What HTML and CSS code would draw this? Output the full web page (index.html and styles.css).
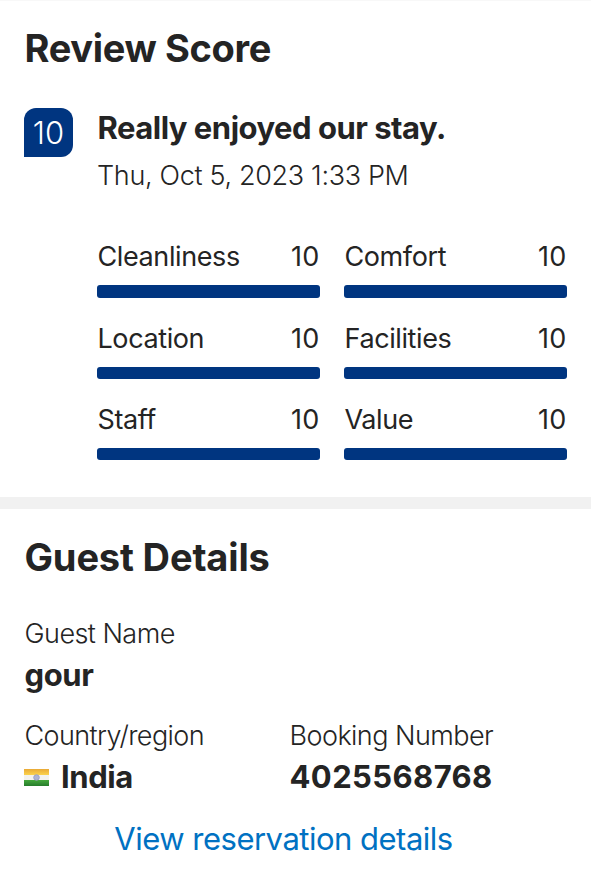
FILE: index.html
```html
<!DOCTYPE html>
<html lang="en">
  <head>
    <meta charset="UTF-8" />
    <meta name="viewport" content="width=device-width, initial-scale=1.0" />
    <title>Review Score</title>
    <link rel="stylesheet" href="styles.css">
  </head>
  <body>
    <section class="review">
      <h1>Review Score</h1>
      <div class="review-body">
        <div class="score-badge"><span>10</span></div>
        <div class="review-content">
          <h2 class="review-title">Really enjoyed our stay.</h2>
          <p class="review-date">Thu, Oct 5, 2023 1:33 PM</p>
          <div class="scores">
            <div class="score">
              <div class="score-text"><span>Cleanliness</span><span class="number">10</span></div>
              <div class="bar"></div>
            </div>
            <div class="score">
              <div class="score-text"><span>Comfort</span><span class="number">10</span></div>
              <div class="bar"></div>
            </div>
            <div class="score">
              <div class="score-text"><span>Location</span><span class="number">10</span></div>
              <div class="bar"></div>
            </div>
            <div class="score">
              <div class="score-text"><span>Facilities</span><span class="number">10</span></div>
              <div class="bar"></div>
            </div>
            <div class="score">
              <div class="score-text"><span>Staff</span><span class="number">10</span></div>
              <div class="bar"></div>
            </div>
            <div class="score">
              <div class="score-text"><span>Value</span><span class="number">10</span></div>
              <div class="bar"></div>
            </div>
          </div>
        </div>
      </div>
    </section>
    <section class="guest">
      <h1 class="guest-title">Guest Details</h1>
      <div class="guest-name">
        <p class="label">Guest Name</p>
        <p class="info">gour</p>
      </div>
      <div class="detail-row">
        <div>
          <p class="label country-label">Country/region</p>
          <p class="info country">
            <svg class="flag" viewBox="0 0 25 17">
              <defs>
                <linearGradient id="saffron" x2="0" y2="1">
                  <stop stop-color="#e9a936" />
                  <stop offset="1" stop-color="#fbd34d" />
                </linearGradient>
                <linearGradient id="green" x2="0" y2="1">
                  <stop stop-color="#45a83c" />
                  <stop offset="1" stop-color="#267c2c" />
                </linearGradient>
              </defs>
              <path fill="url(#saffron)" d="M0 0h25v6H0z" />
              <path fill="#f3f2ee" d="M0 6h25v5H0z" />
              <path fill="url(#green)" d="M0 11h25v6H0z" />
              <circle cx="12.500" cy="8.500" r="2.800" fill="#aeb4d4" stroke="#929ac4" stroke-width=".8" />
            </svg>
            <span>India</span>
          </p>
        </div>
        <div>
          <p class="label booking-label">Booking Number</p>
          <p class="info booking-number">4025568768</p>
        </div>
      </div>
      <a class="reservation-link" href="#">View reservation details</a>
    </section>
  </body>
</html>
```
FILE: styles.css
```css
* {
  margin: 0;
  padding: 0;
  box-sizing: border-box;
}
body {
  background: #fff;
  color: #242424;
  font-family: Inter, "Liberation Sans", sans-serif;
  font-size: 27px;
  line-height: 32px;
}
h1 {
  font-size: 38px;
  line-height: 48px;
  font-weight: 700;
  letter-spacing: -0.35px;
  padding-left: 0.5px;
}
.guest-title {
  letter-spacing: -0.15px;
}
.review {
  height: 509px;
  padding: 23px 24px 0;
  border-top: 1px solid #f8f8f8;
  border-bottom: 12px solid #f1f1f1;
}
.review-body {
  display: flex;
  gap: 24px;
  margin-top: 36.4px;
}
.score-badge {
  display: flex;
  align-items: center;
  justify-content: center;
  width: 49px;
  height: 49px;
  background: #003580;
  border-radius: 12px 12px 12px 0;
  color: #fff;
  font-size: 31px;
  font-weight: 300;
}
.review-content {
  flex: 1;
}
.review-title {
  font-size: 31px;
  line-height: 40px;
  font-weight: 700;
  letter-spacing: -0.5px;
  padding-left: 0.5px;
}
.review-date {
  margin-top: 11.6px;
  font-weight: 300;
  letter-spacing: -0.33px;
}
.scores {
  display: grid;
  grid-template-columns: 1fr 1fr;
  row-gap: 24.3px;
  column-gap: 24px;
  margin-top: 49.3px;
}
.score {
  height: 57px;
}
.score-text {
  display: flex;
  justify-content: space-between;
  letter-spacing: -0.4px;
  padding: 0 0.5px;
}
.number {
  letter-spacing: 0.3px;
}
.bar {
  height: 12.5px;
  margin-top: 12px;
  background: #003580;
  border-radius: 3px;
}
.guest {
  padding: 24px 24px 0;
}
.guest-name {
  margin-top: 37px;
}
.label {
  font-weight: 300;
  letter-spacing: -0.55px;
  padding-left: 0.5px;
}
.country-label {
  letter-spacing: -0.6px;
}
.info {
  font-size: 31px;
  line-height: 40px;
  font-weight: 700;
  letter-spacing: -0.4px;
  margin-top: 5px;
  padding-left: 0.5px;
}
.booking-number {
  letter-spacing: 0.4px;
}
.detail-row {
  display: grid;
  grid-template-columns: 265px 1fr;
  margin-top: 25px;
}
.country {
  display: flex;
  align-items: center;
  gap: 12px;
  padding-left: 0;
}
.flag {
  width: 25px;
  height: 17px;
}
.reservation-link {
  display: block;
  margin: 24px 24px 0 0;
  color: #0071c2;
  font-size: 31px;
  line-height: 36px;
  letter-spacing: -0.5px;
  text-align: center;
  text-decoration: none;
}
```
